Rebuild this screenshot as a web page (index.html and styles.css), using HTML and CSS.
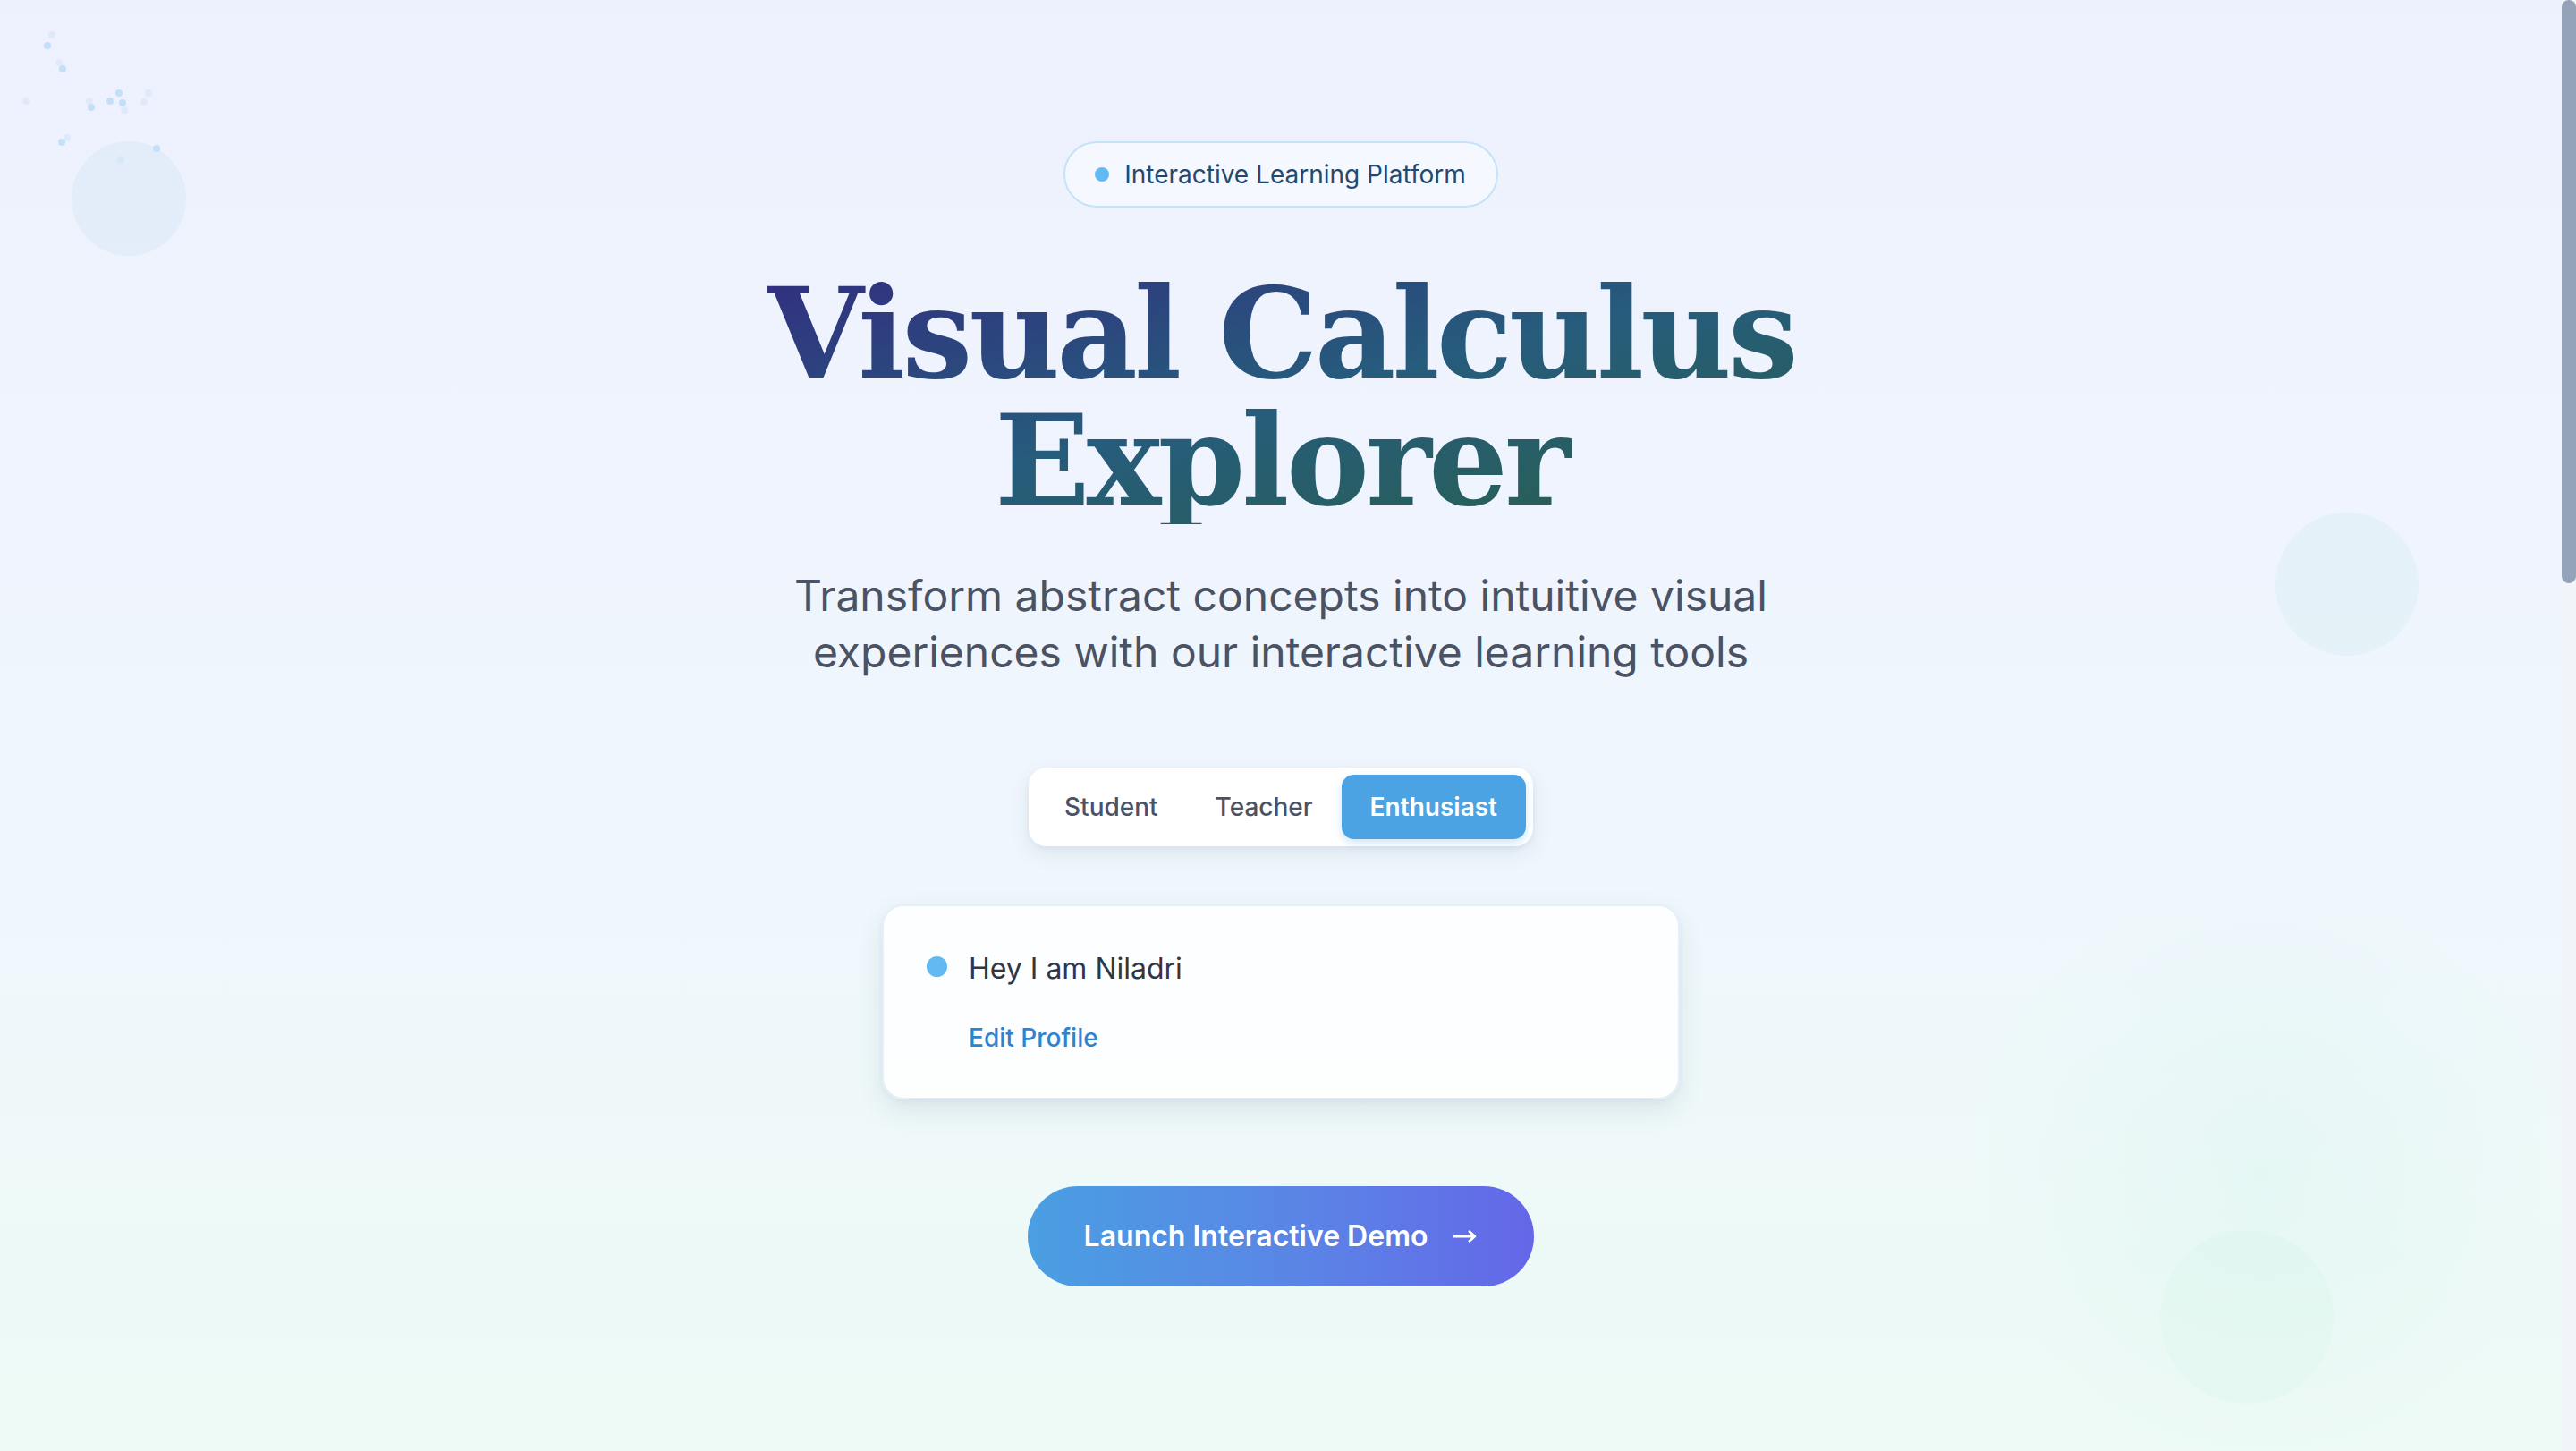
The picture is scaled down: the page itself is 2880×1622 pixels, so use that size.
FILE: index.html
```html
<!DOCTYPE html>
<html lang="en">
<head>
<meta charset="utf-8">
<title>Visual Calculus Explorer</title>
<link rel="stylesheet" href="styles.css">
</head>
<body>
<main class="page">
  <section class="hero">
    <div class="decor" aria-hidden="true">
      <svg class="particles" width="200" height="200" viewBox="0 0 200 200">
        <g fill="#b4d8f7" opacity="0.7">
          <circle cx="53" cy="51" r="4"/><circle cx="70" cy="77" r="4"/><circle cx="133" cy="104" r="4"/>
          <circle cx="123" cy="113" r="4"/><circle cx="137" cy="115" r="4"/><circle cx="102" cy="120" r="4"/>
          <circle cx="69" cy="159" r="4"/><circle cx="175" cy="166" r="4"/>
        </g>
        <g fill="#d3e4f8" opacity="0.55">
          <circle cx="58" cy="39" r="4"/><circle cx="66" cy="70" r="4"/><circle cx="100" cy="113" r="4"/>
          <circle cx="166" cy="104" r="4"/><circle cx="161" cy="114" r="4"/><circle cx="139" cy="123" r="4"/>
          <circle cx="75" cy="154" r="4"/><circle cx="135" cy="179" r="4"/><circle cx="29" cy="113" r="4"/>
        </g>
      </svg>
      <span class="orb orb-left"></span>
      <span class="orb orb-right"></span>
      <span class="orb orb-glow"></span>
      <span class="orb orb-bottom"></span>
    </div>

    <div class="hero-inner">
      <div class="badge"><span class="badge-dot"></span>Interactive Learning Platform</div>
      <h1 class="title">Visual Calculus<br>Explorer</h1>
      <p class="subtitle">Transform abstract concepts into intuitive visual experiences with our interactive learning tools</p>

      <div class="segmented">
        <button class="seg">Student</button>
        <button class="seg">Teacher</button>
        <button class="seg seg-active">Enthusiast</button>
      </div>

      <div class="profile-card">
        <div class="profile-row"><span class="profile-dot"></span><span class="profile-name">Hey I am Niladri</span></div>
        <a class="profile-edit" href="#">Edit Profile</a>
      </div>

      <button class="cta">Launch Interactive Demo
        <svg class="cta-arrow" width="26" height="14" viewBox="0 0 26 14" aria-hidden="true">
          <path d="M0.5 7 H23.5 M18 1.8 L23.8 7 L18 12.2" fill="none" stroke="#ffffff" stroke-width="2.8" stroke-linecap="round" stroke-linejoin="round"/>
        </svg>
      </button>
    </div>
  </section>
</main>
<aside class="scrollbar" aria-hidden="true"><div class="scrollbar-thumb"></div></aside>
</body>
</html>
```
FILE: styles.css
```css
* { box-sizing: border-box; }

html, body { height: 100%; }

body {
  margin: 0;
  display: flex;
  overflow: hidden;
  font-family: Inter, "Noto Sans", sans-serif;
  color: #2d3748;
  background: #eef4fb;
}

.page { flex: 1; min-width: 0; }

.scrollbar {
  flex: none;
  width: 16px;
  height: 100vh;
  background: #f1f4f8;
}
.scrollbar-thumb {
  height: 652px;
  border-radius: 8px;
  background: #94a3b8;
}

.hero {
  position: relative;
  min-height: 100vh;
  overflow: hidden;
  background: linear-gradient(180deg, #edf1fd 0%, #eff4fe 35%, #eff7fd 58%, #eef9f8 82%, #edfaf5 100%);
}

.decor { position: absolute; inset: 0; pointer-events: none; }

.particles { position: absolute; left: 0; top: 0; }

.orb { position: absolute; border-radius: 50%; }
.orb-left { left: 80px; top: 158px; width: 128px; height: 128px; background: rgba(196, 226, 240, 0.28); }
.orb-right { left: 2544px; top: 573px; width: 160px; height: 160px; background: rgba(200, 232, 238, 0.28); }
.orb-glow { left: 2180px; top: 960px; width: 700px; height: 700px; background: radial-gradient(circle, rgba(196, 240, 228, 0.22) 0%, rgba(196, 240, 228, 0) 65%); }
.orb-bottom { left: 2415px; top: 1375px; width: 194px; height: 194px; background: rgba(196, 238, 226, 0.14); }

.hero-inner {
  position: relative;
  display: flex;
  flex-direction: column;
  align-items: center;
  padding-top: 158px;
}

.badge {
  display: inline-flex;
  align-items: center;
  gap: 17px;
  padding: 18px 34px 18px 33px;
  border: 2px solid #c3e3f8;
  border-radius: 999px;
  background: rgba(250, 252, 255, 0.6);
  font-size: 28px;
  line-height: 34px;
  color: #234a6e;
}
.badge-dot { width: 16px; height: 16px; border-radius: 50%; background: #63b9f2; }

.title {
  margin: 70px 0 0;
  font-family: "DejaVu Serif", serif;
  font-weight: 700;
  font-size: 140px;
  line-height: 142px;
  text-align: center;
  letter-spacing: -0.028em;
  background: linear-gradient(to bottom right, #322e80 0%, #265c7c 50%, #29604a 100%);
  -webkit-background-clip: text;
  background-clip: text;
  color: transparent;
}

.subtitle {
  margin: 48px 0 0;
  max-width: 1140px;
  text-align: center;
  font-size: 48px;
  line-height: 63px;
  color: #4a5263;
}

.segmented {
  margin-top: 98px;
  display: flex;
  padding: 8px;
  border-radius: 20px;
  background: #ffffff;
  box-shadow: 0 8px 24px rgba(30, 60, 90, 0.09), 0 2px 6px rgba(30, 60, 90, 0.05);
}
.seg {
  height: 72px;
  padding: 0 32px;
  border: 0;
  border-radius: 14px;
  background: transparent;
  font-family: inherit;
  font-size: 28px;
  font-weight: 500;
  color: #4a5263;
}
.seg-active {
  background: #4ba3e3;
  color: #ffffff;
  font-weight: 600;
  box-shadow: 0 4px 10px rgba(66, 153, 225, 0.25);
}

.profile-card {
  margin-top: 65px;
  width: 892px;
  padding: 46px 48px;
  border: 2px solid #e3effa;
  border-radius: 24px;
  background: rgba(255, 255, 255, 0.85);
  box-shadow: 0 12px 30px rgba(30, 60, 90, 0.1), 0 2px 6px rgba(30, 60, 90, 0.04);
  display: flex;
  flex-direction: column;
  gap: 32px;
}
.profile-row { display: flex; align-items: center; gap: 24px; }
.profile-dot { width: 23px; height: 23px; border-radius: 50%; background: #63b9f2; margin-top: -6px; }
.profile-name { font-size: 32px; line-height: 48px; color: #2d3748; }
.profile-edit {
  margin-left: 47px;
  font-size: 28px;
  line-height: 42px;
  font-weight: 500;
  color: #3182ce;
  text-decoration: none;
  align-self: flex-start;
}

.cta {
  margin-top: 97px;
  display: inline-flex;
  align-items: center;
  gap: 29px;
  padding: 32px 64px 32px 63px;
  border: 0;
  border-radius: 999px;
  background: linear-gradient(90deg, #4a9fe2 0%, #5b84e6 55%, #6467e8 100%);
  font-family: inherit;
  font-size: 32px;
  line-height: 48px;
  font-weight: 600;
  color: #ffffff;
}
.cta-arrow { display: block; }
```
